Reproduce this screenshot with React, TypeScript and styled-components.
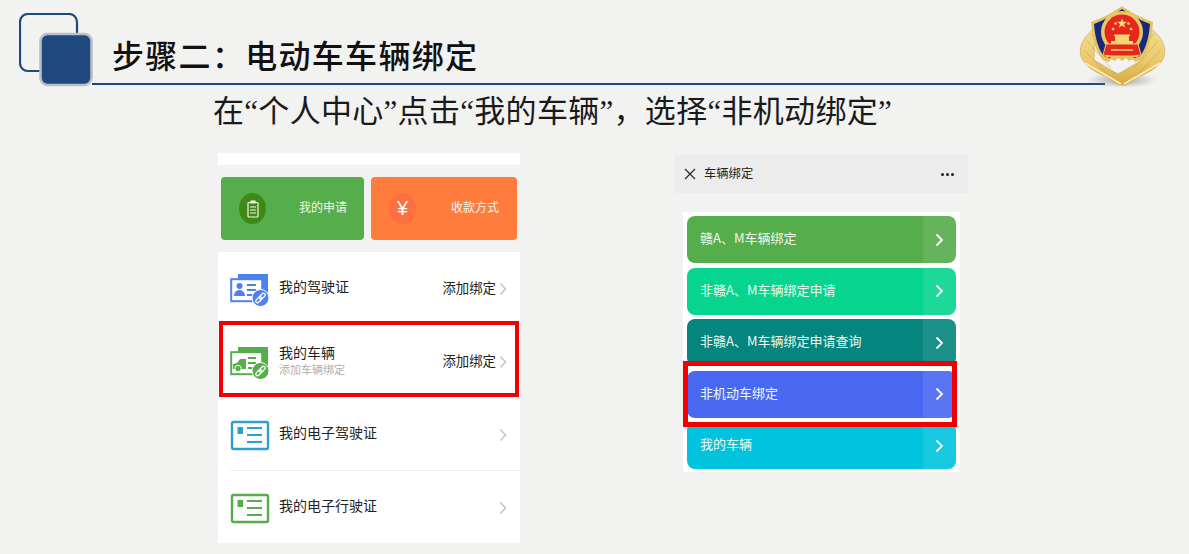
import styled, { createGlobalStyle } from "styled-components";

const GlobalStyle = createGlobalStyle`
  html, body {
    margin: 0;
    padding: 0;
    background: #f2f2f1;
  }
`;

const CJK = `"Noto Sans CJK SC", "Noto Sans", sans-serif`;

const Slide = styled.div`
  width: 1189px;
  height: 554px;
  overflow: hidden;
  background: #f2f2f1;
  font-family: ${CJK};
`;

const Header = styled.header`
  position: relative;
  display: flex;
  align-items: flex-end;
  height: 85px;
  padding-left: 19px;
`;

const LogoMark = styled.svg`
  flex: none;
  width: 75px;
  height: 74px;
  margin-bottom: -2px;
`;

const TitleBar = styled.div`
  width: 1013px;
  height: 50px;
  margin-left: -2px;
  padding-left: 20px;
  box-sizing: border-box;
  border-bottom: 2px solid #1f497d;
`;

const Title = styled.h1`
  margin: 0;
  font-family: "Liberation Serif", ${CJK};
  font-size: 32px;
  font-weight: 500;
  line-height: 45px;
  letter-spacing: 1.3px;
  color: #111;
  white-space: nowrap;
`;

const Emblem = styled.svg`
  position: absolute;
  left: 1075px;
  top: 0;
  width: 95px;
  height: 92px;
`;

const Subtitle = styled.p`
  margin: 0 0 14px 213px;
  font-family: "Liberation Serif", ${CJK};
  font-size: 31px;
  font-weight: 400;
  line-height: 54px;
  letter-spacing: 0.3px;
  color: #1a1a1a;
  white-space: nowrap;
`;

const Panels = styled.div`
  display: flex;
  align-items: flex-start;
  gap: 155px;
  padding-left: 218px;
`;

const LeftPhone = styled.section`
  width: 302px;
`;

const TopStrip = styled.div`
  height: 12px;
  background: #fff;
`;

const Tiles = styled.div`
  display: flex;
  gap: 7px;
  margin: 12px 0;
  padding-left: 3px;
`;

const Tile = styled.div<{ $bg: string; $w: number; $right: number }>`
  display: flex;
  align-items: center;
  justify-content: space-between;
  box-sizing: border-box;
  width: ${(p) => p.$w}px;
  height: 63px;
  padding: 0 ${(p) => p.$right}px 0 18px;
  border-radius: 4px;
  background: ${(p) => p.$bg};
  color: #f3f7ee;
  font-size: 12px;
`;

const TileLabel = styled.span`
  margin-bottom: 4px;
`;

const TileBadge = styled.span<{ $bg: string }>`
  display: flex;
  align-items: center;
  justify-content: center;
  width: 27px;
  height: 31px;
  border-radius: 50%;
  background: ${(p) => p.$bg};
  color: #fff;
  font-size: 20px;
  font-family: "Liberation Sans", sans-serif;
`;

const List = styled.div`
  background: #fff;
  height: 291px;
`;

const Row = styled.div`
  position: relative;
  display: flex;
  align-items: center;
  box-sizing: border-box;
  height: 73px;
  padding: 0 13px 0 12px;
`;

const Divider = styled.div`
  height: 1px;
  margin: -1px 0 0 12px;
  background: #efefef;
`;

const RowIcon = styled.svg`
  flex: none;
  width: 40px;
  height: 36px;
`;

const RowText = styled.div`
  flex: 1;
  margin: 0 0 5px 9px;
  display: flex;
  flex-direction: column;
`;

const RowTitle = styled.span`
  font-size: 14px;
  line-height: 20px;
  color: #222;
`;

const RowSub = styled.span`
  font-size: 11px;
  line-height: 14px;
  color: #aeaeae;
`;

const RowAction = styled.span`
  font-size: 13.4px;
  color: #222;
  margin: 0 3px 4px 0;
`;

const Chevron = styled.svg`
  flex: none;
  width: 8px;
  height: 14px;
`;

const RedFrame = styled.div<{ $top: number; $left: number; $right: number; $bottom: number; $w: number }>`
  position: absolute;
  z-index: 1;
  top: ${(p) => p.$top}px;
  left: ${(p) => p.$left}px;
  right: ${(p) => p.$right}px;
  bottom: ${(p) => p.$bottom}px;
  border: ${(p) => p.$w}px solid #f00000;
  pointer-events: none;
`;

const RightPhone = styled.section`
  width: 293px;
  padding-top: 2px;
`;

const TopBar = styled.div`
  display: flex;
  align-items: center;
  box-sizing: border-box;
  height: 38px;
  padding: 0 14px 0 9px;
  background: #ececec;
  font-size: 12.3px;
  color: #222;
`;

const BarTitle = styled.span`
  flex: 1;
  margin: 0 0 2px 8px;
`;

const Dots = styled.span`
  display: flex;
  gap: 2px;
`;

const Dot = styled.i`
  width: 3px;
  height: 3px;
  border-radius: 50%;
  background: #222;
`;

const Card = styled.div`
  display: flex;
  flex-direction: column;
  gap: 4.5px;
  width: 277px;
  height: 260px;
  box-sizing: border-box;
  margin: 19px 0 0 8px;
  padding: 4px;
  background: #fff;
`;

const ActionButton = styled.div<{ $bg: string }>`
  flex: none;
  display: flex;
  align-items: center;
  height: 47px;
  padding-left: 13px;
  border-radius: 8px;
  background: ${(p) => p.$bg};
  overflow: hidden;
  color: #eef8ee;
  font-size: 13px;
`;

const ButtonLabel = styled.span`
  flex: 1;
  margin-bottom: 4px;
`;

const ArrowCell = styled.span`
  display: flex;
  align-items: center;
  justify-content: center;
  width: 33px;
  align-self: stretch;
  background: rgba(255, 255, 255, 0.09);
`;

const ButtonSlot = styled.div`
  position: relative;
`;

const chevronGrey = (
  <Chevron viewBox="0 0 8 14">
    <path d="M1.5 1.5 6.5 7l-5 5.5" fill="none" stroke="#c8c8c8" strokeWidth="1.7" />
  </Chevron>
);

function WhiteArrow() {
  return (
    <svg width="9" height="14" viewBox="0 0 9 14">
      <path d="M1.5 1.5 7 7l-5.5 5.5" fill="none" stroke="#fff" strokeWidth="1.8" />
    </svg>
  );
}

function Logo() {
  return (
    <LogoMark viewBox="0 0 75 74">
      <rect x="1" y="1" width="57" height="57" rx="8" fill="none" stroke="#1f497d" strokeWidth="2.2" />
      <rect x="21.5" y="21" width="51" height="51" rx="7" fill="#1f497d" stroke="#b9bfc7" strokeWidth="2.6" />
    </LogoMark>
  );
}

function PoliceEmblem() {
  return (
    <Emblem viewBox="0 0 95 92">
      <defs>
        <linearGradient id="gold" x1="0" y1="0" x2="0" y2="1">
          <stop offset="0" stopColor="#f3dc90" />
          <stop offset="0.55" stopColor="#eccb6c" />
          <stop offset="1" stopColor="#d6a844" />
        </linearGradient>
        <radialGradient id="shadow">
          <stop offset="0" stopColor="#555" stopOpacity="0.55" />
          <stop offset="1" stopColor="#777" stopOpacity="0" />
        </radialGradient>
      </defs>
      <ellipse cx="47" cy="80" rx="36" ry="8" fill="url(#shadow)" />
      <path d="M20 28C9 36 3 46 6 57c4 9 13 15 26 20l12 8h7l12-8c13-5 22-11 26-20 3-11-3-21-14-29l-8 32-24 14-24-14Z" fill="url(#gold)" stroke="#cfa94a" strokeWidth=".6" />
      <path d="M9 50 34 76M12 41 36 68M16 34 38 60M86 50 61 76M83 41 59 68M79 34 57 60" stroke="#c0943a" strokeWidth=".8" opacity=".55" />
      <path d="M10 63 46 84M85 63 49 84" stroke="#f8ecb8" strokeWidth="2" />
      <path d="M47 6C40 11 28 18 16 22c1 15 4 29 12 38l6 2 2-3 4 2 3-3 4 3 4-3 3 3 4-2 2 3 6-2c8-9 11-23 12-38C66 18 54 11 47 6Z" fill="#e4c262" />
      <path d="M47 9C41 13 30 20 19 24c1 13 4 25 10 32l6 2 2-3 4 2 3-3 3 2 3-2 3 3 4-2 2 3 6-2c6-7 9-19 10-32C64 20 53 13 47 9Z" fill="#17297a" />
      <circle cx="47" cy="32" r="21" fill="#e9c868" />
      <path d="M31 48h32v9H31Z" fill="#e9c868" />
      <circle cx="47" cy="32" r="17.500" fill="#e8261c" />
      <path d="M31 44h32l3 11-9 1H37l-9-1Z" fill="#e8261c" stroke="#e9c868" strokeWidth="1" />
      <path d="M36 41h22v3H36Zm4-5h14v5H40Zm-1-1.500h16V36H39Z" fill="#f3d777" />
      <path d="M47 18l1.200 3.700 3.900 0-3.100 2.300 1.200 3.700-3.200-2.300-3.200 2.300 1.200-3.700-3.100-2.300 3.900 0Z" fill="#f7dc78" />
      <circle cx="38" cy="29" r="1.300" fill="#f7dc78" />
      <circle cx="40.500" cy="23.500" r="1.300" fill="#f7dc78" />
      <circle cx="53.500" cy="23.500" r="1.300" fill="#f7dc78" />
      <circle cx="56" cy="29" r="1.300" fill="#f7dc78" />
      <path d="M36 50h22" stroke="#f3d777" strokeWidth="1.500" />
    </Emblem>
  );
}

function ChainBadge({ color }: { color: string }) {
  return (
    <>
      <circle cx="30.500" cy="27" r="8.500" fill={color} stroke="#fff" strokeWidth="1" />
      <g transform="rotate(-45 30.500 27)" fill="none" stroke="#fff" strokeWidth="1.300">
        <rect x="24.500" y="25.300" width="7" height="3.400" rx="1.700" />
        <rect x="29.500" y="25.300" width="7" height="3.400" rx="1.700" />
      </g>
    </>
  );
}

function LicenseIcon() {
  return (
    <RowIcon viewBox="0 0 40 36">
      <path d="M8 3h30v23H8Z" fill="#4d82ee" />
      <rect x="1.200" y="8.200" width="31" height="22" fill="#fff" stroke="#4d82ee" strokeWidth="2" />
      <circle cx="9.500" cy="15" r="3" fill="#4d82ee" />
      <path d="M4 25c0-4 3-6 5.500-6s5.500 2 5.500 6Z" fill="#4d82ee" />
      <path d="M17 14h9M17 19h9M17 24h6" stroke="#4d82ee" strokeWidth="2" />
      <ChainBadge color="#4d82ee" />
    </RowIcon>
  );
}

function VehicleIcon() {
  return (
    <RowIcon viewBox="0 0 40 36">
      <path d="M8 3h30v23H8Z" fill="#56ad4b" />
      <rect x="1.200" y="8.200" width="31" height="22" fill="#fff" stroke="#56ad4b" strokeWidth="2" />
      <path d="M3 25v-5l4-1 3-4h6v10Z" fill="#56ad4b" />
      <circle cx="8" cy="24.500" r="3.200" fill="#56ad4b" stroke="#fff" />
      <path d="M18 14h8M18 19h8M18 24h5" stroke="#56ad4b" strokeWidth="2" />
      <ChainBadge color="#56ad4b" />
    </RowIcon>
  );
}

function CardIcon({ color }: { color: string }) {
  return (
    <RowIcon viewBox="0 0 40 36">
      <rect x="2" y="5" width="36" height="27" rx="1.500" fill="#fff" stroke={color} strokeWidth="2.400" />
      <rect x="7.500" y="10" width="5.500" height="7" fill={color} />
      <path d="M17 11h15M17 18h15M17 25h15" stroke={color} strokeWidth="1.800" />
    </RowIcon>
  );
}

const buttons = [
  { label: "赣A、M车辆绑定", bg: "#56ad4b" },
  { label: "非赣A、M车辆绑定申请", bg: "#07d58f" },
  { label: "非赣A、M车辆绑定申请查询", bg: "#05857e" },
  { label: "非机动车绑定", bg: "#4968f2", marked: true },
  { label: "我的车辆", bg: "#02c3de" },
];

export default function App() {
  return (
    <Slide>
      <GlobalStyle />
      <Header>
        <Logo />
        <TitleBar>
          <Title>步骤二：电动车车辆绑定</Title>
        </TitleBar>
        <PoliceEmblem />
      </Header>
      <Subtitle>在“个人中心”点击“我的车辆”，选择“非机动绑定”</Subtitle>
      <Panels>
        <LeftPhone>
          <TopStrip />
          <Tiles>
            <Tile $bg="#56ad4b" $w={143} $right={17}>
              <TileBadge $bg="#3f8a14">
                <svg width="12" height="18" viewBox="0 0 12 18">
                  <rect x="1" y="2.500" width="10" height="14.500" rx="1" fill="none" stroke="#f4f7e8" strokeWidth="1.200" />
                  <rect x="3.500" y="0.500" width="5" height="3" fill="#f4f7e8" />
                  <path d="M3 7h6M3 10h6M3 13h6" stroke="#f4f7e8" strokeWidth="1" />
                </svg>
              </TileBadge>
              <TileLabel>我的申请</TileLabel>
            </Tile>
            <Tile $bg="#ff7c3d" $w={146} $right={18}>
              <TileBadge $bg="#fb6f40">¥</TileBadge>
              <TileLabel>收款方式</TileLabel>
            </Tile>
          </Tiles>
          <List>
            <Row>
              <LicenseIcon />
              <RowText>
                <RowTitle>我的驾驶证</RowTitle>
              </RowText>
              <RowAction>添加绑定</RowAction>
              {chevronGrey}
            </Row>
            <Row>
              <VehicleIcon />
              <RowText>
                <RowTitle>我的车辆</RowTitle>
                <RowSub>添加车辆绑定</RowSub>
              </RowText>
              <RowAction>添加绑定</RowAction>
              {chevronGrey}
              <RedFrame $top={-4} $left={1} $right={1} $bottom={1} $w={4} />
            </Row>
            <Row>
              <CardIcon color="#2e9fd0" />
              <RowText>
                <RowTitle>我的电子驾驶证</RowTitle>
              </RowText>
              {chevronGrey}
            </Row>
            <Divider />
            <Row>
              <CardIcon color="#56ad4b" />
              <RowText>
                <RowTitle>我的电子行驶证</RowTitle>
              </RowText>
              {chevronGrey}
            </Row>
          </List>
        </LeftPhone>
        <RightPhone>
          <TopBar>
            <svg width="12" height="12" viewBox="0 0 12 12">
              <path d="M1 1l10 10M11 1 1 11" stroke="#222" strokeWidth="1.100" />
            </svg>
            <BarTitle>车辆绑定</BarTitle>
            <Dots>
              <Dot />
              <Dot />
              <Dot />
            </Dots>
          </TopBar>
          <Card>
            {buttons.map((b) => (
              <ButtonSlot key={b.label}>
                <ActionButton $bg={b.bg}>
                  <ButtonLabel>{b.label}</ButtonLabel>
                  <ArrowCell>
                    <WhiteArrow />
                  </ArrowCell>
                </ActionButton>
                {b.marked && <RedFrame $top={-10} $left={-4} $right={-1} $bottom={-9} $w={5} />}
              </ButtonSlot>
            ))}
          </Card>
        </RightPhone>
      </Panels>
    </Slide>
  );
}
